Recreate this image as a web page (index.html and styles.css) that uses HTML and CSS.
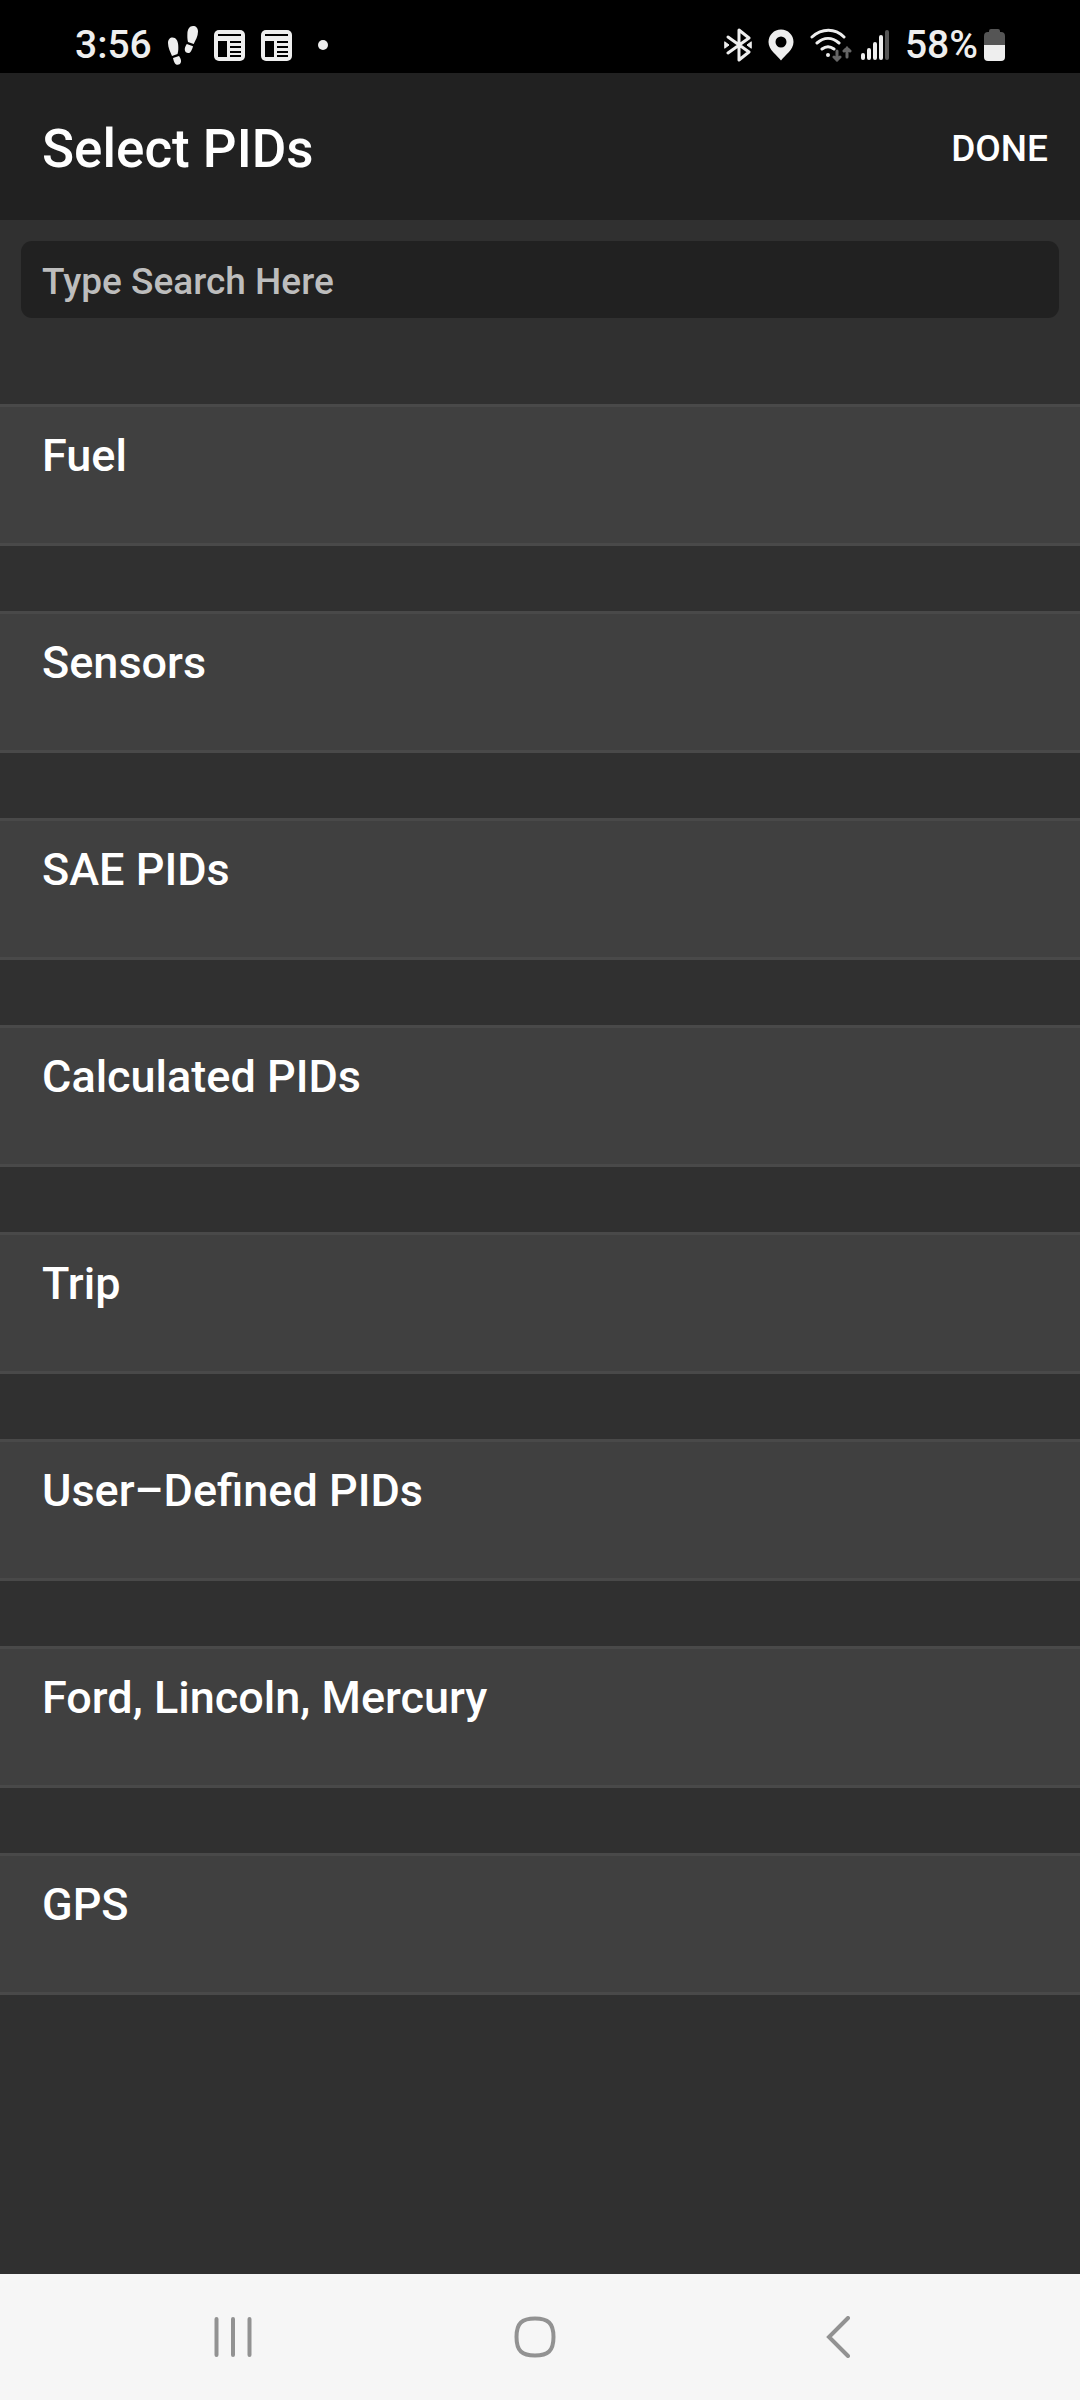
FILE: index.html
```html
<!DOCTYPE html>
<html lang="en">
  <head>
    <meta charset="UTF-8" />
    <meta name="viewport" content="width=device-width, initial-scale=1.0" />
    <title>Select PIDs</title>
    <link rel="stylesheet" href="styles.css">
  </head>
  <body>
    <div class="status-bar">
      <div class="status-left">
        <span>3:56</span>
        <!-- steps -->
        <svg width="30" height="40" viewBox="1 0 30 40" fill="#eee">
          <path d="M1 18C1 14.500 3 12.500 5.500 12.500C9 12.500 11 16 11.200 20C11.400 23 11.500 26 10.500 29L5 31C3.500 27 1 23 1 18Z" />
          <path d="M6 33L12 31C13.500 33 14.500 35.500 13.800 37.500C13 40 9.500 40.500 8 38.500C7 37 6.500 35 6 33Z" />
          <path d="M31 6.500C31 3 29 1 26 1C22.500 1 20.500 4.500 20.400 8.500C20.300 11.500 20.300 14 21 17L26.700 19C28.500 15 31 11.500 31 6.500Z" />
          <path d="M19.800 19L26 21.300C25.500 23.500 24.500 26 23 27.500C21 29 18 27.500 17.800 25C17.600 23 18.500 21 19.800 19Z" />
        </svg>
        <!-- news -->
        <svg width="31" height="31" viewBox="0 0 31 31">
          <rect width="31" height="31" rx="5" fill="#eee" />
          <path d="M4 11H13V27H4Z" />
          <path d="M4 5H27M16 12H27M16 17H27M16 22H27M16 26H27" stroke="#000" stroke-width="2" />
        </svg>
        <svg width="31" height="31" viewBox="0 0 31 31">
          <rect width="31" height="31" rx="5" fill="#eee" />
          <path d="M4 11H13V27H4Z" />
          <path d="M4 5H27M16 12H27M16 17H27M16 22H27M16 26H27" stroke="#000" stroke-width="2" />
        </svg>
        <span class="dot"></span>
      </div>
      <div class="status-right">
        <!-- bluetooth -->
        <svg width="28" height="34" viewBox="0 0 28 34" fill="none" stroke="#eee" stroke-width="3" stroke-linejoin="round" stroke-linecap="round">
          <path d="M4 9L25 24L15 32V2L25 10L4 25" />
          <path d="M1 14L5 17L1 20ZM27 14L23 17L27 20Z" fill="#eee" stroke-width="1" />
        </svg>
        <!-- location -->
        <svg width="26" height="32" viewBox="0 0 26 32">
          <path d="M13 0.500C6 0.500 0.500 6 0.500 13C0.500 21 9 26 13 31.500C17 26 25.500 21 25.500 13C25.500 6 20 0.500 13 0.500ZM13 7.500A5.500 5.500 0 1 1 13 18.500A5.500 5.500 0 1 1 13 7.500Z" fill="#eee" fill-rule="evenodd" />
        </svg>
        <!-- wifi -->
        <svg class="wifi" width="43" height="34" viewBox="0 0 43 34" fill="none" stroke="#eee" stroke-width="3" stroke-linecap="round">
          <path d="M2 9C12 0 25 0 34 9M7 15C14 9 22 9 29 15M12 21C16 18 20 18 24 21" />
          <circle cx="18" cy="27" r="2" fill="#eee" stroke="none" />
          <path d="M27 23V32M24 29L27 32L30 29M37 29V20M34 23L37 20L40 23" stroke="#666" />
        </svg>
        <!-- signal -->
        <svg width="28" height="32" viewBox="0 0 28 32" fill="none" stroke="#eee" stroke-width="4" stroke-linecap="round">
          <path d="M2 26V29M8 21V29M14 15V29M20 8V29" />
          <path d="M26 3V29" stroke="#555" />
        </svg>
        <span class="battery-text">58%</span>
        <svg width="21" height="34" viewBox="0 0 21 34">
          <path d="M7 1H14Q16 1 16 3V4H17Q21 4 21 8V18H0V8Q0 4 4 4H5V3Q5 1 7 1Z" fill="#555" />
          <path d="M0 17H21V29Q21 33 17 33H4Q0 33 0 29Z" fill="#eee" />
        </svg>
      </div>
    </div>

    <header class="header">
      <h1 class="title">Select PIDs</h1>
      <button class="done">DONE</button>
    </header>

    <main class="content">
      <div class="search">
        <input class="search-input" type="text" placeholder="Type Search Here" aria-label="Type Search Here" />
      </div>
      <ul class="pid-list">
        <li><button class="pid-group">Fuel</button></li>
        <li><button class="pid-group">Sensors</button></li>
        <li><button class="pid-group">SAE PIDs</button></li>
        <li><button class="pid-group">Calculated PIDs</button></li>
        <li><button class="pid-group">Trip</button></li>
        <li><button class="pid-group">User–Defined PIDs</button></li>
        <li><button class="pid-group">Ford, Lincoln, Mercury</button></li>
        <li><button class="pid-group">GPS</button></li>
      </ul>
    </main>

    <nav class="nav-bar">
      <button class="nav-btn" aria-label="Recent apps">
        <svg width="42" height="42" viewBox="0 0 42 42"><path d="M4.500 3V39M21 3V39M37.500 3V39" /></svg>
      </button>
      <button class="nav-btn" aria-label="Home">
        <svg width="42" height="42" viewBox="0 0 42 42"><path d="M21 2.500C34 2.500 39.500 7 39.500 21S34 39.500 21 39.500S2.500 35 2.500 21S8 2.500 21 2.500Z" /></svg>
      </button>
      <button class="nav-btn" aria-label="Back">
        <svg width="42" height="42" viewBox="0 0 42 42"><path d="M31 2L12 21L31 40" /></svg>
      </button>
    </nav>
  </body>
</html>
```
FILE: styles.css
```css
* {
  box-sizing: border-box;
}

body {
  margin: 0;
  min-height: 100vh;
  display: flex;
  flex-direction: column;
  background: #303030;
  color: #fff;
  font-family: Roboto, sans-serif;
  font-weight: 500;
}

button {
  border: none;
  background: none;
  padding: 0;
  color: inherit;
  font: inherit;
  cursor: pointer;
}

svg {
  display: block;
  flex-shrink: 0;
}

/* status bar */
.status-bar {
  display: flex;
  justify-content: space-between;
  padding: 17px 75px 0;
  height: 73px;
  background: #000;
  color: #eee;
  font-size: 39px;
  line-height: 56px;
}

.status-left,
.status-right {
  display: flex;
  align-items: center;
  gap: 16px;
}

.dot {
  width: 10px;
  height: 10px;
  margin-left: 10px;
  border-radius: 50%;
  background: #eee;
}

.wifi {
  margin-right: -8px;
}

.battery-text {
  margin-right: -10px;
}

/* header */
.header {
  display: flex;
  align-items: center;
  justify-content: space-between;
  height: 147px;
  padding: 4px 32px 0 42px;
  background: #212121;
}

.title {
  margin: 0;
  font-size: 53px;
  font-weight: 500;
}

.done {
  font-size: 37px;
}

/* search */
.content {
  flex: 1;
}

.search {
  padding: 21px;
}

.search-input {
  display: block;
  width: 100%;
  height: 77px;
  padding: 4px 21px 0;
  border: none;
  border-radius: 11px;
  background: #212121;
  color: #fff;
  font: inherit;
  font-size: 37px;
}

.search-input::placeholder {
  color: #bdbdbd;
  opacity: 1;
}

/* groups */
.pid-list {
  display: flex;
  flex-direction: column;
  gap: 65px;
  margin: 0;
  padding: 65px 0;
  list-style: none;
}

.pid-group {
  display: flex;
  align-items: flex-start;
  width: 100%;
  min-height: 142px;
  padding: 22px 42px;
  border-top: 3px solid #494949;
  border-bottom: 3px solid #494949;
  background: #404040;
  font-size: 45px;
  line-height: 53px;
  text-align: left;
}

/* bottom navigation */
.nav-bar {
  display: grid;
  grid-template-columns: repeat(3, 1fr);
  height: 126px;
  padding: 0 91px 0 82px;
  background: #f6f6f6;
}

.nav-btn {
  display: flex;
  align-items: center;
  justify-content: center;
}

.nav-btn svg {
  fill: none;
  stroke: #929292;
  stroke-width: 4;
  stroke-linecap: round;
}
```
